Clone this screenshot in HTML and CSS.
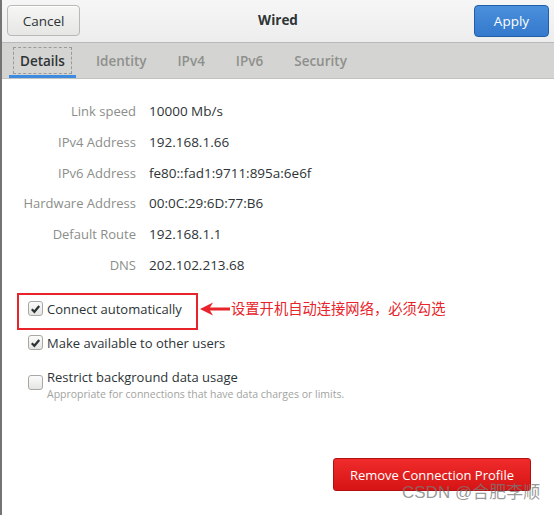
FILE: index.html
```html
<!DOCTYPE html>
<html>
<head>
<meta charset="utf-8">
<link rel="stylesheet" href="styles.css">
</head>
<body>
<div class="window">
  <header class="headerbar">
    <button class="btn btn-cancel">Cancel</button>
    <div class="title">Wired</div>
    <button class="btn btn-apply">Apply</button>
  </header>
  <nav class="tabs">
    <div class="tab active"><span class="tab-focus">Details</span></div>
    <div class="tab">Identity</div>
    <div class="tab">IPv4</div>
    <div class="tab">IPv6</div>
    <div class="tab">Security</div>
  </nav>
  <main class="content">
    <div class="details">
      <div class="label">Link speed</div><div class="value">10000 Mb/s</div>
      <div class="label">IPv4 Address</div><div class="value">192.168.1.66</div>
      <div class="label">IPv6 Address</div><div class="value">fe80::fad1:9711:895a:6e6f</div>
      <div class="label">Hardware Address</div><div class="value">00:0C:29:6D:77:B6</div>
      <div class="label">Default Route</div><div class="value">192.168.1.1</div>
      <div class="label">DNS</div><div class="value">202.102.213.68</div>
    </div>
    <div class="checks">
      <div class="check checked"><span class="box"><svg viewBox="0 0 14 14" width="14" height="14"><path d="M3 7.2 L5.8 10 L11 3.8" fill="none" stroke="#2e3436" stroke-width="2.4" stroke-linejoin="miter" stroke-linecap="butt"/></svg></span><span class="check-label">Connect automatically</span></div>
      <div class="check checked"><span class="box"><svg viewBox="0 0 14 14" width="14" height="14"><path d="M3 7.2 L5.8 10 L11 3.8" fill="none" stroke="#2e3436" stroke-width="2.4" stroke-linejoin="miter" stroke-linecap="butt"/></svg></span><span class="check-label">Make available to other users</span></div>
      <div class="check check-two"><span class="box"></span><div class="check-text"><span class="check-label">Restrict background data usage</span><span class="check-sub">Appropriate for connections that have data charges or limits.</span></div></div>
    </div>
    <div class="actions">
      <button class="btn btn-remove">Remove Connection Profile</button>
    </div>
    <div class="annot-box"></div>
    <svg class="annot-arrow" width="30" height="14" viewBox="0 0 30 14"><path d="M0 7 L13 0.5 L10 5.5 L30 5.5 L30 8.5 L10 8.5 L13 13.5 Z" fill="#e8232a"/></svg>
    <div class="annot-text">设置开机自动连接网络，必须勾选</div>
    <div class="watermark">CSDN @合肥李顺</div>
  </main>
</div>
</body>
</html>
```
FILE: styles.css
```css
html, body {
  margin: 0;
  padding: 0;
  background: #ffffff;
}
body {
  font-family: "Open Sans", "Noto Sans", "Noto Sans CJK SC", sans-serif;
  color: #2e3436;
  font-size: 13px;
}
.window {
  width: 554px;
  height: 515px;
  box-sizing: border-box;
  border-left: 2px solid #747474;
  display: flex;
  flex-direction: column;
  overflow: hidden;
}
.headerbar {
  height: 43px;
  box-sizing: border-box;
  display: flex;
  align-items: flex-start;
  justify-content: space-between;
  padding: 5px 5px 0 5px;
  background: linear-gradient(#f6f6f6, #ededed);
  border-bottom: 1px solid #b9b9b9;
}
.btn {
  font-family: inherit;
  font-size: 13.5px;
  border-radius: 4px;
  cursor: default;
  padding: 0;
}
.btn-cancel {
  width: 73px;
  height: 31px;
  color: #2e3436;
  border: 1px solid #b8b8b5;
  background: linear-gradient(#f6f6f5, #e6e6e4);
  box-shadow: inset 0 1px #ffffff;
}
.title {
  font-weight: bold;
  font-size: 13.5px;
  line-height: 31px;
  margin-left: 2px;
}
.btn-apply {
  width: 75px;
  height: 32px;
  color: #ffffff;
  border: 1px solid #1f5fa8;
  background: linear-gradient(#4a90dc, #3479cc);
}
.tabs {
  height: 36px;
  box-sizing: border-box;
  display: flex;
  align-items: stretch;
  gap: 9px;
  padding-left: 7px;
  background: #d4d4d2;
  border-bottom: 1px solid #c2c2c0;
}
.tab {
  padding: 0 11px;
  display: flex;
  align-items: center;
  color: #8e908c;
  font-size: 13.5px;
  font-weight: 600;
  box-sizing: border-box;
}
.tab.active {
  color: #2e3436;
  padding: 4px 4px 1px 4px;
  border-bottom: 3px solid #3d8be1;
}
.tab-focus {
  border: 1px dashed #9a9a9a;
  padding: 0 6px;
  align-self: stretch;
  display: flex;
  align-items: center;
}
.content {
  flex: 1;
  position: relative;
  display: flex;
  flex-direction: column;
}
.details {
  display: grid;
  grid-template-columns: 134px auto;
  column-gap: 13px;
  row-gap: 10.8px;
  padding-top: 22px;
  line-height: 20px;
  font-size: 13.5px;
}
.label {
  text-align: right;
  color: #8b8e8a;
  font-size: 13px;
}
.value {
  color: #2e3436;
}
.checks {
  display: flex;
  flex-direction: column;
  gap: 14px;
  padding: 24px 0 0 26px;
}
.check {
  display: flex;
  align-items: center;
  gap: 4px;
  font-size: 13px;
  line-height: 20px;
}
.check-two {
  align-items: flex-start;
}
.check-two .box {
  margin-top: 8px;
}
.box {
  width: 15px;
  height: 15px;
  box-sizing: border-box;
  border: 1px solid #a7a9a5;
  border-radius: 3px;
  background: linear-gradient(#fbfbfb, #e5e5e3);
  display: flex;
  align-items: center;
  justify-content: center;
  flex: none;
}
.box svg {
  display: block;
}
.check-text {
  display: flex;
  flex-direction: column;
}
.check-sub {
  font-size: 10.5px;
  line-height: 14px;
  color: #a2a4a0;
}
.actions {
  margin-top: auto;
  display: flex;
  justify-content: flex-end;
  padding: 0 23px 24px 0;
}
.btn-remove {
  width: 198px;
  height: 33px;
  color: #ffffff;
  border: 1px solid #b20f12;
  border-radius: 3px;
  background: linear-gradient(#ef2b2b, #d71414);
  font-size: 13px;
}
.annot-box {
  position: absolute;
  left: 15px;
  top: 214px;
  width: 181px;
  height: 37px;
  box-sizing: border-box;
  border: 2px solid #e8232a;
}
.annot-arrow {
  position: absolute;
  left: 198px;
  top: 223px;
}
.annot-text {
  position: absolute;
  left: 229px;
  top: 219px;
  font-family: "Noto Sans CJK SC", sans-serif;
  font-size: 14.3px;
  line-height: 20px;
  color: #e8232a;
}
.watermark {
  position: absolute;
  left: 400px;
  top: 403px;
  font-family: "Liberation Sans", "Noto Sans CJK SC", sans-serif;
  font-size: 17px;
  line-height: 22px;
  color: rgba(120, 120, 120, 0.75);
  white-space: nowrap;
}
```
